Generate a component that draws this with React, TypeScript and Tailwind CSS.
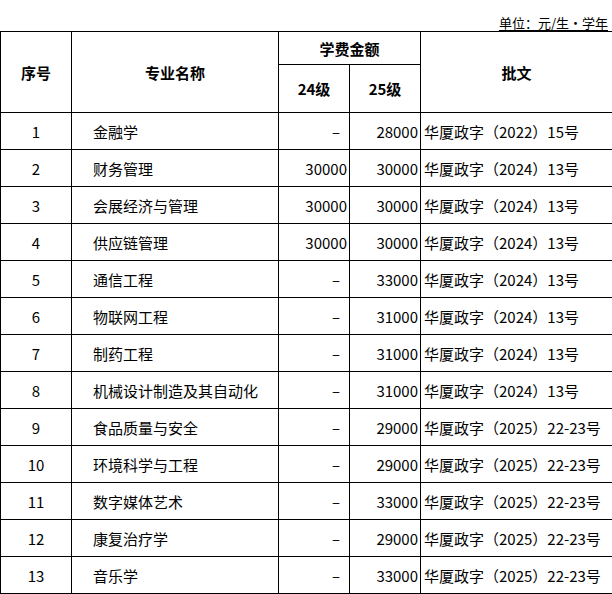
import React from "react";

type Row = {
  no: number;
  name: string;
  fee24: string;
  fee25: string;
  doc: string;
};

const rows: Row[] = [
  { no: 1, name: "金融学", fee24: "-", fee25: "28000", doc: "华厦政字（2022）15号" },
  { no: 2, name: "财务管理", fee24: "30000", fee25: "30000", doc: "华厦政字（2024）13号" },
  { no: 3, name: "会展经济与管理", fee24: "30000", fee25: "30000", doc: "华厦政字（2024）13号" },
  { no: 4, name: "供应链管理", fee24: "30000", fee25: "30000", doc: "华厦政字（2024）13号" },
  { no: 5, name: "通信工程", fee24: "-", fee25: "33000", doc: "华厦政字（2024）13号" },
  { no: 6, name: "物联网工程", fee24: "-", fee25: "31000", doc: "华厦政字（2024）13号" },
  { no: 7, name: "制药工程", fee24: "-", fee25: "31000", doc: "华厦政字（2024）13号" },
  { no: 8, name: "机械设计制造及其自动化", fee24: "-", fee25: "31000", doc: "华厦政字（2024）13号" },
  { no: 9, name: "食品质量与安全", fee24: "-", fee25: "29000", doc: "华厦政字（2025）22-23号" },
  { no: 10, name: "环境科学与工程", fee24: "-", fee25: "29000", doc: "华厦政字（2025）22-23号" },
  { no: 11, name: "数字媒体艺术", fee24: "-", fee25: "33000", doc: "华厦政字（2025）22-23号" },
  { no: 12, name: "康复治疗学", fee24: "-", fee25: "29000", doc: "华厦政字（2025）22-23号" },
  { no: 13, name: "音乐学", fee24: "-", fee25: "33000", doc: "华厦政字（2025）22-23号" },
];

// accounting-style empty value: a dash sitting a bit in from the right edge
const FeeCell = ({ value }: { value: string }) =>
  value === "-" ? (
    <td className="border border-black text-right pr-[9px]">–</td>
  ) : (
    <td className="border border-black text-right pr-[2px]">{value}</td>
  );

const App = () => {
  return (
    <div
      className="w-[612px] h-[594px] bg-white text-black overflow-hidden"
      style={{ fontFamily: '"Noto Sans CJK SC", "Liberation Sans", sans-serif' }}
    >
      <div className="h-[31px] flex items-end justify-end pr-[4px] pb-[2px]">
        <span className="text-[13px] leading-none underline underline-offset-2">
          单位：元/生•学年
        </span>
      </div>
      <table className="table-fixed border-collapse w-[612px] text-[15px] leading-none">
        <colgroup>
          <col className="w-[71px]" />
          <col className="w-[207px]" />
          <col className="w-[71px]" />
          <col className="w-[71px]" />
          <col className="w-[192px]" />
        </colgroup>
        <thead>
          <tr className="h-[33px]">
            <th rowSpan={2} className="border border-black font-bold">
              序号
            </th>
            <th rowSpan={2} className="border border-black font-bold">
              专业名称
            </th>
            <th colSpan={2} className="border border-black font-bold">
              学费金额
            </th>
            <th rowSpan={2} className="border border-black font-bold">
              批文
            </th>
          </tr>
          <tr className="h-[48px]">
            <th className="border border-black font-bold">24级</th>
            <th className="border border-black font-bold">25级</th>
          </tr>
        </thead>
        <tbody>
          {rows.map((r) => (
            <tr key={r.no} className="h-[37px]">
              <td className="border border-black text-center">{r.no}</td>
              <td className="border border-black pl-[21px] whitespace-nowrap">{r.name}</td>
              <FeeCell value={r.fee24} />
              <FeeCell value={r.fee25} />
              <td className="border border-black pl-[3px] whitespace-nowrap">{r.doc}</td>
            </tr>
          ))}
        </tbody>
      </table>
    </div>
  );
};

export default App;
